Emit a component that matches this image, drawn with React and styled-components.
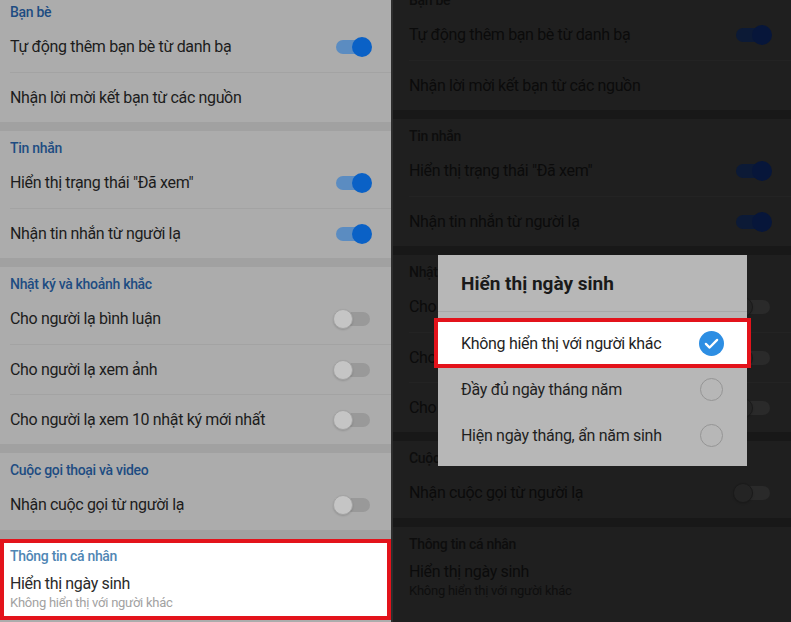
import React from 'react'
import styled, { createGlobalStyle } from 'styled-components'

const GlobalStyle = createGlobalStyle`
    html, body {
        margin: 0;
        padding: 0;
        background: #2b2b2b;
    }
    body {
        font-family: Roboto, "Noto Sans", sans-serif;
    }
`

const light = {
    bg: '#acacac',
    band: '#a1a1a1',
    divider: '#a3a3a3',
    text: '#1c1c1c',
    sub: '#a2a2a2',
    header: '#1e4c82',
    trackOn: '#5b8cc1',
    thumbOn: '#0a61c6',
    trackOff: '#999999',
    thumbOff: '#c5c5c5',
    thumbEdge: '#a3a3a3',
}

const dark = {
    bg: '#1f1f1f',
    band: '#181818',
    divider: '#232323',
    text: '#0b0b0b',
    sub: '#0e0e0e',
    header: '#0d0d0d',
    trackOn: '#0c1a36',
    thumbOn: '#07163a',
    trackOff: '#2a2a2a',
    thumbOff: '#242424',
    thumbEdge: '#1a1a1a',
}

const sections = [
    {
        title: 'Bạn bè',
        rows: [
            { label: 'Tự động thêm bạn bè từ danh bạ', toggle: true },
            { label: 'Nhận lời mời kết bạn từ các nguồn' },
        ],
    },
    {
        title: 'Tin nhắn',
        rows: [
            { label: 'Hiển thị trạng thái "Đã xem"', toggle: true },
            { label: 'Nhận tin nhắn từ người lạ', toggle: true },
        ],
    },
    {
        title: 'Nhật ký và khoảnh khắc',
        rows: [
            { label: 'Cho người lạ bình luận', toggle: false },
            { label: 'Cho người lạ xem ảnh', toggle: false },
            { label: 'Cho người lạ xem 10 nhật ký mới nhất', toggle: false },
        ],
    },
    {
        title: 'Cuộc gọi thoại và video',
        rows: [{ label: 'Nhận cuộc gọi từ người lạ', toggle: false }],
    },
    {
        title: 'Thông tin cá nhân',
        personal: true,
        rows: [{ label: 'Hiển thị ngày sinh', sub: 'Không hiển thị với người khác' }],
    },
]

const options = [
    { label: 'Không hiển thị với người khác', checked: true },
    { label: 'Đầy đủ ngày tháng năm' },
    { label: 'Hiện ngày tháng, ẩn năm sinh' },
]

const Screen = styled.div`
    display: flex;
    gap: 2px;
    width: 791px;
    height: 622px;
    overflow: hidden;
    background: #2e2e2e;
`

const Panel = styled.div`
    position: relative;
    flex: none;
    width: ${p => p.$width}px;
    height: 100%;
    overflow: hidden;
    background: ${p => p.$pal.bg};
`

const List = styled.div`
    margin-top: ${p => p.$offset}px;
`

const Section = styled.section`
    background: ${p => (p.$highlight ? '#ffffff' : p.$pal.bg)};
    box-shadow: ${p => (p.$highlight ? 'inset 0 0 0 4px #e3131b' : 'none')};
    border-top: ${p => (p.$first ? 'none' : `9px solid ${p.$pal.band}`)};
`

const SectionTitle = styled.div`
    box-sizing: border-box;
    height: 27px;
    padding: 9px 0 0 ${p => p.$pad}px;
    font-size: 14px;
    line-height: 16px;
    font-weight: 500;
    letter-spacing: -0.3px;
    color: ${p => (p.$highlight ? '#4f86b4' : p.$pal.header)};
`

const Row = styled.div`
    box-sizing: border-box;
    min-height: 50px;
    margin-left: ${p => p.$pad}px;
    padding-right: 19px;
    display: flex;
    align-items: center;
    justify-content: space-between;
    border-top: ${p => (p.$first ? 'none' : `1px solid ${p.$pal.divider}`)};
`

const RowText = styled.div`
    display: flex;
    flex-direction: column;
    padding: ${p => (p.$hasSub ? '8px 0 9px' : '0')};
`

const Label = styled.span`
    font-size: 16px;
    line-height: 20px;
    letter-spacing: -0.35px;
    color: ${p => (p.$highlight ? '#2a2a2a' : p.$pal.text)};
`

const Sub = styled.span`
    font-size: 13px;
    line-height: 17px;
    letter-spacing: -0.25px;
    color: ${p => p.$pal.sub};
`

const Switch = styled.span`
    position: relative;
    flex: none;
    width: 39px;
    height: 20px;
`

const Track = styled.span`
    position: absolute;
    left: 3px;
    right: 2px;
    top: 3px;
    height: 14px;
    border-radius: 7px;
    background: ${p => (p.$on ? p.$pal.trackOn : p.$pal.trackOff)};
`

const Knob = styled.span`
    position: absolute;
    top: 0;
    ${p => (p.$on ? 'right: 0;' : 'left: 0;')}
    box-sizing: border-box;
    width: 20px;
    height: 20px;
    border-radius: 50%;
    background: ${p => (p.$on ? p.$pal.thumbOn : p.$pal.thumbOff)};
    border: ${p => (p.$on ? 'none' : `1px solid ${p.$pal.thumbEdge}`)};
    box-shadow: ${p => (p.$on ? 'none' : '0 1px 2px rgba(0,0,0,0.15)')};
`

const Dialog = styled.div`
    position: absolute;
    left: 45px;
    top: 255px;
    width: 309px;
    background: #b7b7b7;
    padding-bottom: 8px;
`

const DialogTitle = styled.div`
    box-sizing: border-box;
    height: 57px;
    padding: 17px 23px 0;
    font-size: 19px;
    line-height: 24px;
    font-weight: 700;
    color: #1a1a1a;
    border-bottom: 1px solid #a8a8a8;
    margin-bottom: 8px;
`

const Option = styled.div`
    box-sizing: border-box;
    height: 46px;
    display: flex;
    align-items: center;
    justify-content: space-between;
    padding: ${p => (p.$checked ? '0 25px 0 25px' : '0 23px 0 23px')};
    margin: ${p => (p.$checked ? '0 -2px' : '0')};
    background: ${p => (p.$checked ? '#ffffff' : 'transparent')};
    box-shadow: ${p => (p.$checked ? '0 0 0 2px #e3131b, inset 0 0 0 2px #e3131b' : 'none')};
    font-size: 16px;
    letter-spacing: -0.3px;
    color: #1f1f1f;
`

const Radio = styled.span`
    box-sizing: border-box;
    width: 23px;
    height: 23px;
    margin-right: 1px;
    border-radius: 50%;
    border: 1.5px solid #959595;
`

const CheckIcon = () => (
    <svg width="25" height="25" viewBox="0 0 24 24">
        <circle cx="12" cy="12" r="12" fill="#2d8ee3" />
        <path d="M6.6 12.4l3.6 3.5 7.2-7.4" fill="none" stroke="#fff" strokeWidth="2.2" strokeLinecap="round" strokeLinejoin="round" />
    </svg>
)

const Toggle = ({ on, pal }) => (
    <Switch>
        <Track $on={on} $pal={pal} />
        <Knob $on={on} $pal={pal} />
    </Switch>
)

const Settings = ({ pal, pad, offset, annotate }) => (
    <List $offset={offset}>
        {sections.map((section, i) => {
            const hl = annotate && section.personal
            return (
                <Section key={section.title} $pal={pal} $highlight={hl} $first={i === 0}>
                    <SectionTitle $pal={pal} $pad={pad} $highlight={hl}>
                        {section.title}
                    </SectionTitle>
                    {section.rows.map((row, j) => (
                        <Row key={row.label} $pal={pal} $pad={pad} $first={j === 0}>
                            <RowText $hasSub={!!row.sub}>
                                <Label $pal={pal} $highlight={hl}>{row.label}</Label>
                                {row.sub && <Sub $pal={hl ? light : pal}>{row.sub}</Sub>}
                            </RowText>
                            {row.toggle !== undefined && <Toggle on={row.toggle} pal={pal} />}
                        </Row>
                    ))}
                </Section>
            )
        })}
    </List>
)

const App = () => {
    return (
        <>
            <GlobalStyle />
            <Screen>
                <Panel $width={391} $pal={light}>
                    <Settings pal={light} pad={10} offset={-5} annotate />
                </Panel>
                <Panel $width={398} $pal={dark}>
                    <Settings pal={dark} pad={16} offset={-17} />
                    <Dialog>
                        <DialogTitle>Hiển thị ngày sinh</DialogTitle>
                        {options.map(opt => (
                            <Option key={opt.label} $checked={opt.checked}>
                                {opt.label}
                                {opt.checked ? <CheckIcon /> : <Radio />}
                            </Option>
                        ))}
                    </Dialog>
                </Panel>
            </Screen>
        </>
    )
}

export default App
